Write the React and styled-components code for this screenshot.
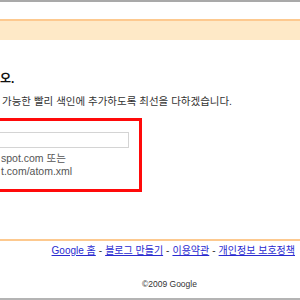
import styled, { createGlobalStyle } from "styled-components";

const GlobalStyle = createGlobalStyle`
  body {
    margin: 0;
    background: #fff;
    font-family: "Liberation Sans", Arial, "Noto Sans CJK KR", sans-serif;
  }
`

const Page = styled.div`
  width: 300px;
  height: 300px;
  box-sizing: border-box;
  border-top: 2px solid #a9a9a9;
  border-bottom: 2px solid #b4b4b4;
  overflow: hidden;
  display: flex;
  flex-direction: column;
`

const Band = styled.div`
  margin-top: 17px;
  height: 19px;
  border-top: 2px solid #fdc98f;
  background: #fee9c7;
`

const Content = styled.div`
  padding-top: 32px;
  flex: 1;
`

const Heading = styled.h2`
  margin: 0;
  font-size: 12px;
  line-height: 14px;
  font-weight: bold;
  color: #111;
`

const Lead = styled.p`
  margin: 8px 0 0 2px;
  font-size: 10.5px;
  line-height: 14px;
  color: #333;
  white-space: nowrap;
`

const RedBox = styled.div`
  margin: 10px 0 0 -10px;
  width: 152px;
  height: 74px;
  box-sizing: border-box;
  border: 3px solid #ff0a0a;
  padding: 11px 10px 0 0;
`

const Input = styled.div`
  margin-left: -4px;
  height: 16px;
  border: 1px solid #d4d4d4;
  box-sizing: border-box;
`

const Hint = styled.div`
  margin: 4px 0 0 8px;
  font-size: 10.5px;
  line-height: 12.5px;
  color: #555;
  white-space: nowrap;
`

const Footer = styled.div`
  border-top: 2px solid #fdc98f;
  margin-top: 47px;
`

const Links = styled.div`
  display: flex;
  justify-content: flex-end;
  gap: 3px;
  padding: 3px 5px 0 0;
  font-size: 10px;
  line-height: 14px;
  color: #333;
  white-space: nowrap;

  a {
    color: #2a2ad0;
    text-decoration: underline;
  }
`

const Copy = styled.div`
  margin: 21px 0 0 142px;
  font-size: 8.5px;
  line-height: 10px;
  color: #333;
`

export default function App() {
  return (
    <>
      <GlobalStyle />
      <Page>
        <Band />
        <Content>
          <Heading>오.</Heading>
          <Lead>가능한 빨리 색인에 추가하도록 최선을 다하겠습니다.</Lead>
          <RedBox>
            <Input />
            <Hint>spot.com 또는<br />t.com/atom.xml</Hint>
          </RedBox>
          <Footer>
            <Links>
              <a href="#">Google 홈</a>-
              <a href="#">블로그 만들기</a>-
              <a href="#">이용약관</a>-
              <a href="#">개인정보 보호정책</a>
            </Links>
            <Copy>©2009 Google</Copy>
          </Footer>
        </Content>
      </Page>
    </>
  );
}
